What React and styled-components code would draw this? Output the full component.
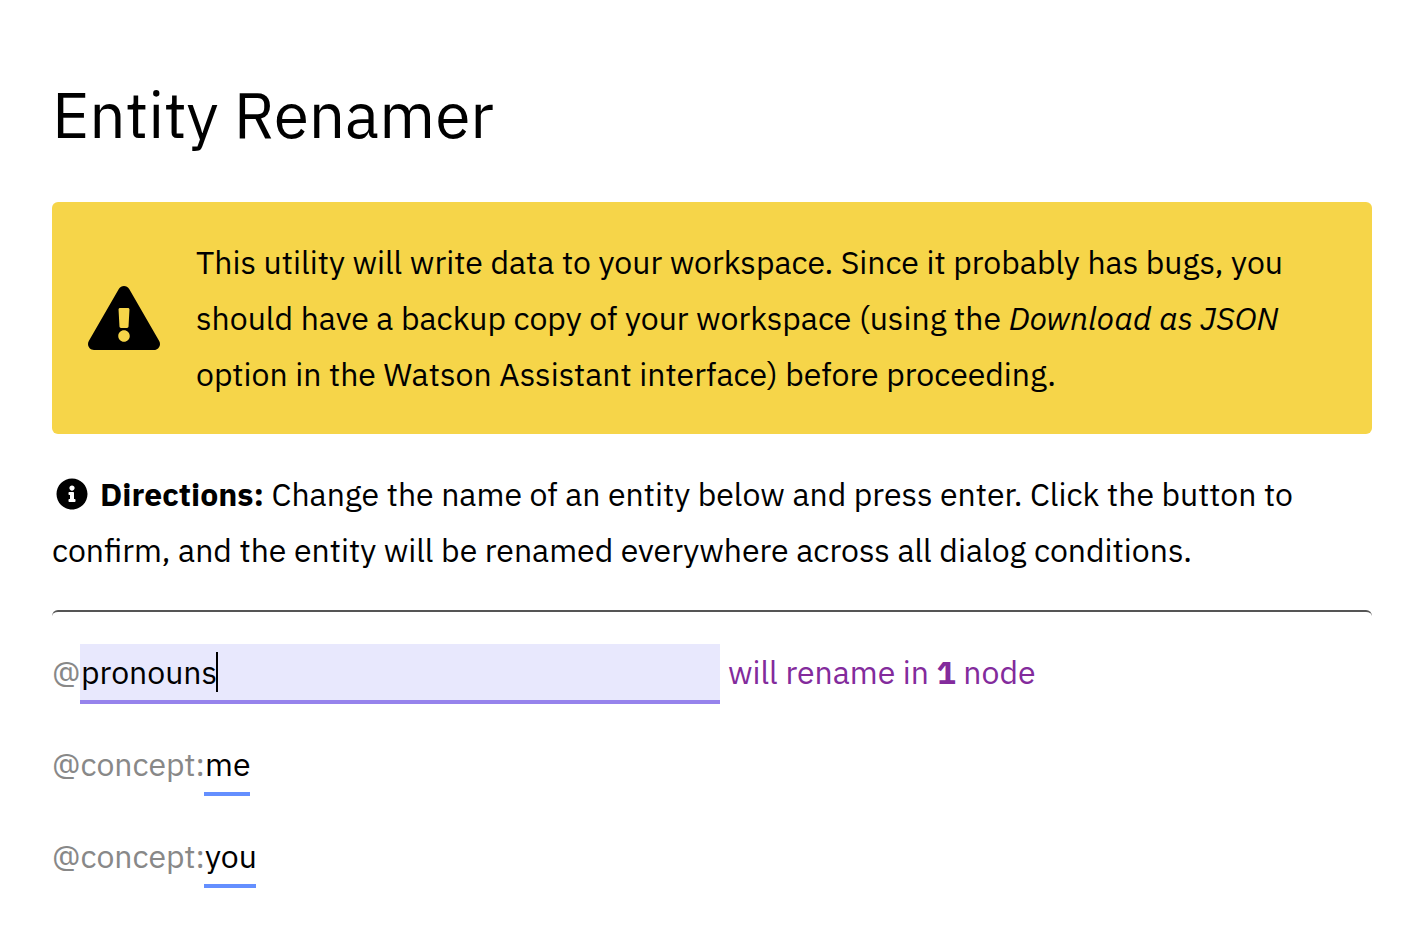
import React, { useState } from 'react';
import styled, { createGlobalStyle } from 'styled-components';
import { FaExclamationTriangle, FaInfoCircle } from 'react-icons/fa';

const GlobalStyle = createGlobalStyle`
  *, *::before, *::after { box-sizing: border-box; }
  body {
    margin: 0;
    background: #fff;
    color: #000;
    font-family: 'IBM Plex Sans', Roboto, 'Liberation Sans', sans-serif;
    font-size: 32px;
    line-height: 56px;
  }
`;

const Page = styled.main`
  padding: 72px 56px 40px 52px;
`;

const Title = styled.h1`
  margin: 0 0 46px;
  font-size: 64px;
  font-weight: 400;
  line-height: 84px;
`;

const Warning = styled.section`
  display: flex;
  align-items: center;
  gap: 36px;
  padding: 32px 36px;
  border-radius: 6px;
  background: #f6d549;
`;

const WarningIcon = styled(FaExclamationTriangle)`
  flex: none;
  width: 72px;
  height: 64px;
`;

const WarningText = styled.p`
  flex: 1;
  margin: 0;
`;

const Directions = styled.p`
  margin: 32px 0;
`;

const InfoIcon = styled(FaInfoCircle)`
  width: 32px;
  height: 32px;
  margin: 0 12px 0 4px;
  vertical-align: -4px;
`;

const Entities = styled.fieldset`
  display: flex;
  flex-direction: column;
  gap: 32px;
  min-width: 0;
  margin: 0;
  padding: 32px 0 0;
  border: 0;
  border-top: 2px solid #555;
  border-radius: 6px;
`;

const EntityRow = styled.div`
  display: flex;
  align-items: flex-start;
`;

const Prefix = styled.label`
  flex: none;
  width: ${({ $width }) => $width}px;
  color: #888;
  white-space: nowrap;
`;

const Field = styled.div`
  position: relative;
  flex: 0 1 ${({ $width }) => $width}px;
  min-width: 0;
`;

const NameInput = styled.input`
  display: block;
  width: 100%;
  height: 60px;
  padding: 0 0 0 1px;
  border: 0;
  border-bottom: 4px solid ${({ $editing }) => ($editing ? '#9683ec' : '#648fff')};
  border-radius: 0;
  outline: 0;
  background: ${({ $editing }) => ($editing ? '#e8e8fd' : 'transparent')};
  color: inherit;
  font: inherit;
  caret-color: transparent;
`;

const Caret = styled.span`
  position: absolute;
  top: 8px;
  left: 136px;
  width: 2px;
  height: 40px;
  background: #000;
`;

const Status = styled.output`
  margin-left: 8px;
  color: #832b9c;
`;

const ENTITIES = [
  { id: 'pronouns', prefix: '@', prefixWidth: 28, name: 'pronouns', width: 640, editing: true, nodes: 1 },
  { id: 'concept-me', prefix: '@concept:', prefixWidth: 152, name: 'me', width: 46 },
  { id: 'concept-you', prefix: '@concept:', prefixWidth: 152, name: 'you', width: 52 },
];

function Entity({ id, prefix, prefixWidth, name, width, editing, nodes }) {
  const [value, setValue] = useState(name);
  return (
    <EntityRow>
      <Prefix htmlFor={id} $width={prefixWidth}>{prefix}</Prefix>
      <Field $width={width}>
        <NameInput
          id={id}
          type="text"
          spellCheck={false}
          $editing={editing}
          value={value}
          onChange={(event) => setValue(event.target.value)}
        />
        {editing && <Caret aria-hidden="true" />}
      </Field>
      {editing && (
        <Status htmlFor={id}>
          will rename in <strong>{nodes}</strong> node
        </Status>
      )}
    </EntityRow>
  );
}

export default function App() {
  return (
    <>
      <GlobalStyle />
      <Page>
        <Title>Entity Renamer</Title>
        <Warning>
          <WarningIcon aria-hidden="true" />
          <WarningText>
            This utility will write data to your workspace. Since it probably has bugs, you
            should have a backup copy of your workspace (using the <em>Download as JSON</em>{' '}
            option in the Watson Assistant interface) before proceeding.
          </WarningText>
        </Warning>
        <Directions>
          <InfoIcon aria-hidden="true" />
          <strong>Directions:</strong> Change the name of an entity below and press enter. Click
          the button to confirm, and the entity will be renamed everywhere across all dialog
          conditions.
        </Directions>
        <Entities>
          {ENTITIES.map((entity) => (
            <Entity key={entity.id} {...entity} />
          ))}
        </Entities>
      </Page>
    </>
  );
}
